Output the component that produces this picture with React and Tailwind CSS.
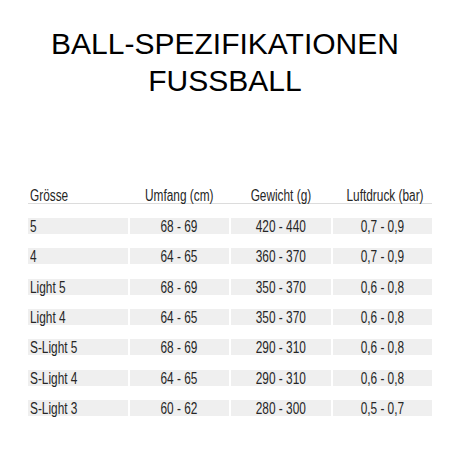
import React from 'react';

const rows = [
  ['5', '68 - 69', '420 - 440', '0,7 - 0,9'],
  ['4', '64 - 65', '360 - 370', '0,7 - 0,9'],
  ['Light 5', '68 - 69', '350 - 370', '0,6 - 0,8'],
  ['Light 4', '64 - 65', '350 - 370', '0,6 - 0,8'],
  ['S-Light 5', '68 - 69', '290 - 310', '0,6 - 0,8'],
  ['S-Light 4', '64 - 65', '290 - 310', '0,6 - 0,8'],
  ['S-Light 3', '60 - 62', '280 - 300', '0,5 - 0,7'],
];

const headers = ['Grösse', 'Umfang (cm)', 'Gewicht (g)', 'Luftdruck (bar)'];

// condensed look: no narrow font installed, so squeeze the glyphs
const Cell = ({ text, first }) => (
  <div className={first ? 'pl-[2px] whitespace-nowrap' : 'text-center whitespace-nowrap'}>
    <span className={`inline-block scale-x-[0.74] ${first ? 'origin-left' : 'origin-center'}`}>{text}</span>
  </div>
);

export default function App() {
  return (
    <div className="w-[450px] h-[450px] bg-white overflow-hidden">
      {/* title */}
      <h1 className="pt-[25px] text-center text-[30px] leading-[37px] text-black font-normal font-['Liberation_Sans',Arial,sans-serif]">
        BALL-SPEZIFIKATIONEN
        <br />
        FUSSBALL
      </h1>

      {/* spec table */}
      <div className="mt-[89px] ml-[28px] w-[404px] text-[16px] text-[#262626] font-['Liberation_Sans',Arial,sans-serif]">
        <div className="grid grid-cols-4 gap-x-[2px] border-b border-[#dcdcdc] h-[16px] leading-[15px]">
          {headers.map((h, i) => (
            <Cell key={i} text={h} first={i === 0} />
          ))}
        </div>
        <div className="mt-[14px] flex flex-col gap-y-[14.33px]">
          {rows.map((r, ri) => (
            <div key={ri} className="grid grid-cols-4 gap-x-[2px]">
              {r.map((c, ci) => (
                <div key={ci} className="bg-[#efefef] h-[16px] leading-[18px]">
                  <Cell text={c} first={ci === 0} />
                </div>
              ))}
            </div>
          ))}
        </div>
      </div>
    </div>
  );
}
